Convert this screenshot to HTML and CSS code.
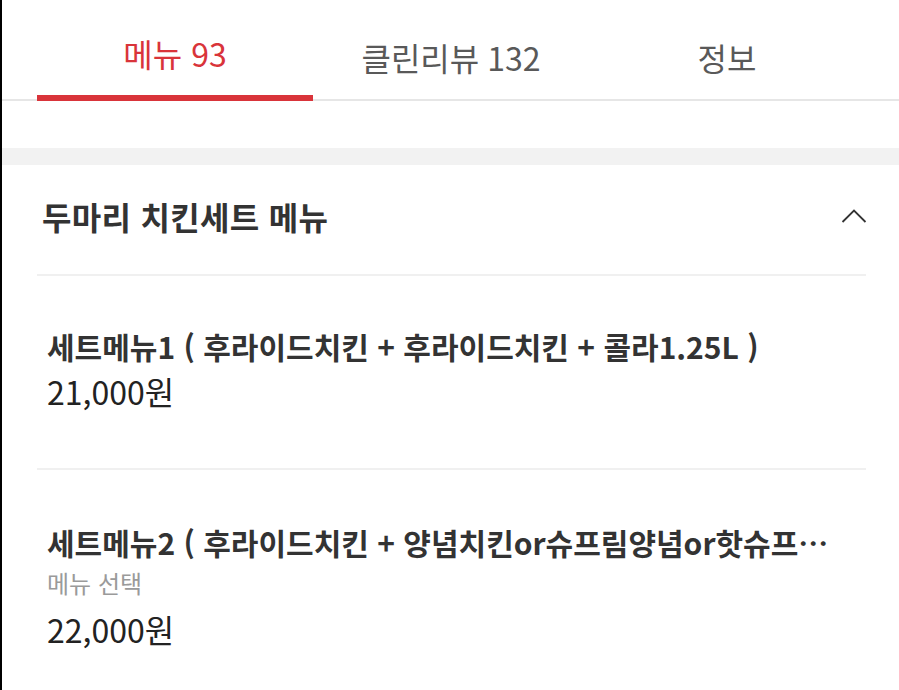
FILE: index.html
```html
<!DOCTYPE html>
<html lang="ko">
<head>
<meta charset="utf-8">
<title>메뉴</title>
<link rel="stylesheet" href="styles.css">
</head>
<body>
<div class="page">
  <nav class="tabs">
    <div class="tab active">메뉴 93</div>
    <div class="tab">클린리뷰 <span class="num">132</span></div>
    <div class="tab">정보</div>
  </nav>
  <div class="spacer"></div>
  <div class="band"></div>
  <section class="section">
    <header class="section-head">
      <h2 class="section-title">두마리 치킨세트 메뉴</h2>
      <svg class="chev" width="26" height="16" viewBox="0 0 26 16" aria-hidden="true">
        <polyline points="1.5,14 13,2.5 24.5,14" fill="none" stroke="#333" stroke-width="1.8"/>
      </svg>
    </header>
    <div class="item">
      <div class="item-title">세트메뉴1 ( 후라이드치킨 + 후라이드치킨 + 콜라1.25L )</div>
      <div class="item-price">21,000원</div>
    </div>
    <div class="item last">
      <div class="item-title" title="세트메뉴2 ( 후라이드치킨 + 양념치킨or슈프림양념or핫슈프림양념 )">세트메뉴2 ( 후라이드치킨 + 양념치킨or슈프림양념or핫슈프…</div>
      <div class="item-sub">메뉴 선택</div>
      <div class="item-price">22,000원</div>
    </div>
  </section>
</div>
</body>
</html>
```

FILE: styles.css
```css
* { box-sizing: border-box; }
html, body { margin: 0; padding: 0; background: #fff; }
body {
  font-family: "Noto Sans CJK KR", "Noto Sans", "Liberation Sans", sans-serif;
  color: #333;
}
.page {
  border-left: 2px solid #000;
  min-height: 690px;
  overflow: hidden;
}
.tabs {
  display: flex;
  padding: 0 34px 0 35px;
  border-bottom: 2px solid #e6e6e6;
  height: 101px;
}
.tab {
  flex: 1;
  height: 99px;
  display: flex;
  align-items: center;
  justify-content: center;
  padding-top: 14px;
  font-size: 32px;
  color: #595959;
}
.tab .num { margin-left: 8px; }
.tab.active {
  color: #d9343a;
  height: 101px;
  margin-bottom: -2px;
  border-bottom: 6px solid #d9343a;
  padding-top: 10px;
}
.spacer { height: 47px; }
.band { height: 17px; background: #f2f2f2; }
.section { padding: 0 33px 0 35px; }
.section-head {
  height: 111px;
  display: flex;
  align-items: center;
  justify-content: space-between;
  border-bottom: 2px solid #f0f0f0;
  padding-left: 5px;
}
.section-title {
  margin: -7px 0 0 0;
  font-size: 32px;
  font-weight: 700;
  color: #333;
  letter-spacing: 0.3px;
}
.chev { display: block; margin-top: -8px; margin-right: -1px; }
.item {
  padding: 50px 20px 52px 10px;
  border-bottom: 2px solid #f0f0f0;
}
.item.last { border-bottom: none; padding-top: 52px; }
.item-title {
  font-size: 30px;
  line-height: 40px;
  font-weight: 700;
  color: #333;
  white-space: nowrap;
}
.item-sub {
  font-size: 24px;
  line-height: 42px;
  color: #9a9a9a;
}
.item-price {
  font-size: 32px;
  line-height: 50px;
  color: #222;
}
```
